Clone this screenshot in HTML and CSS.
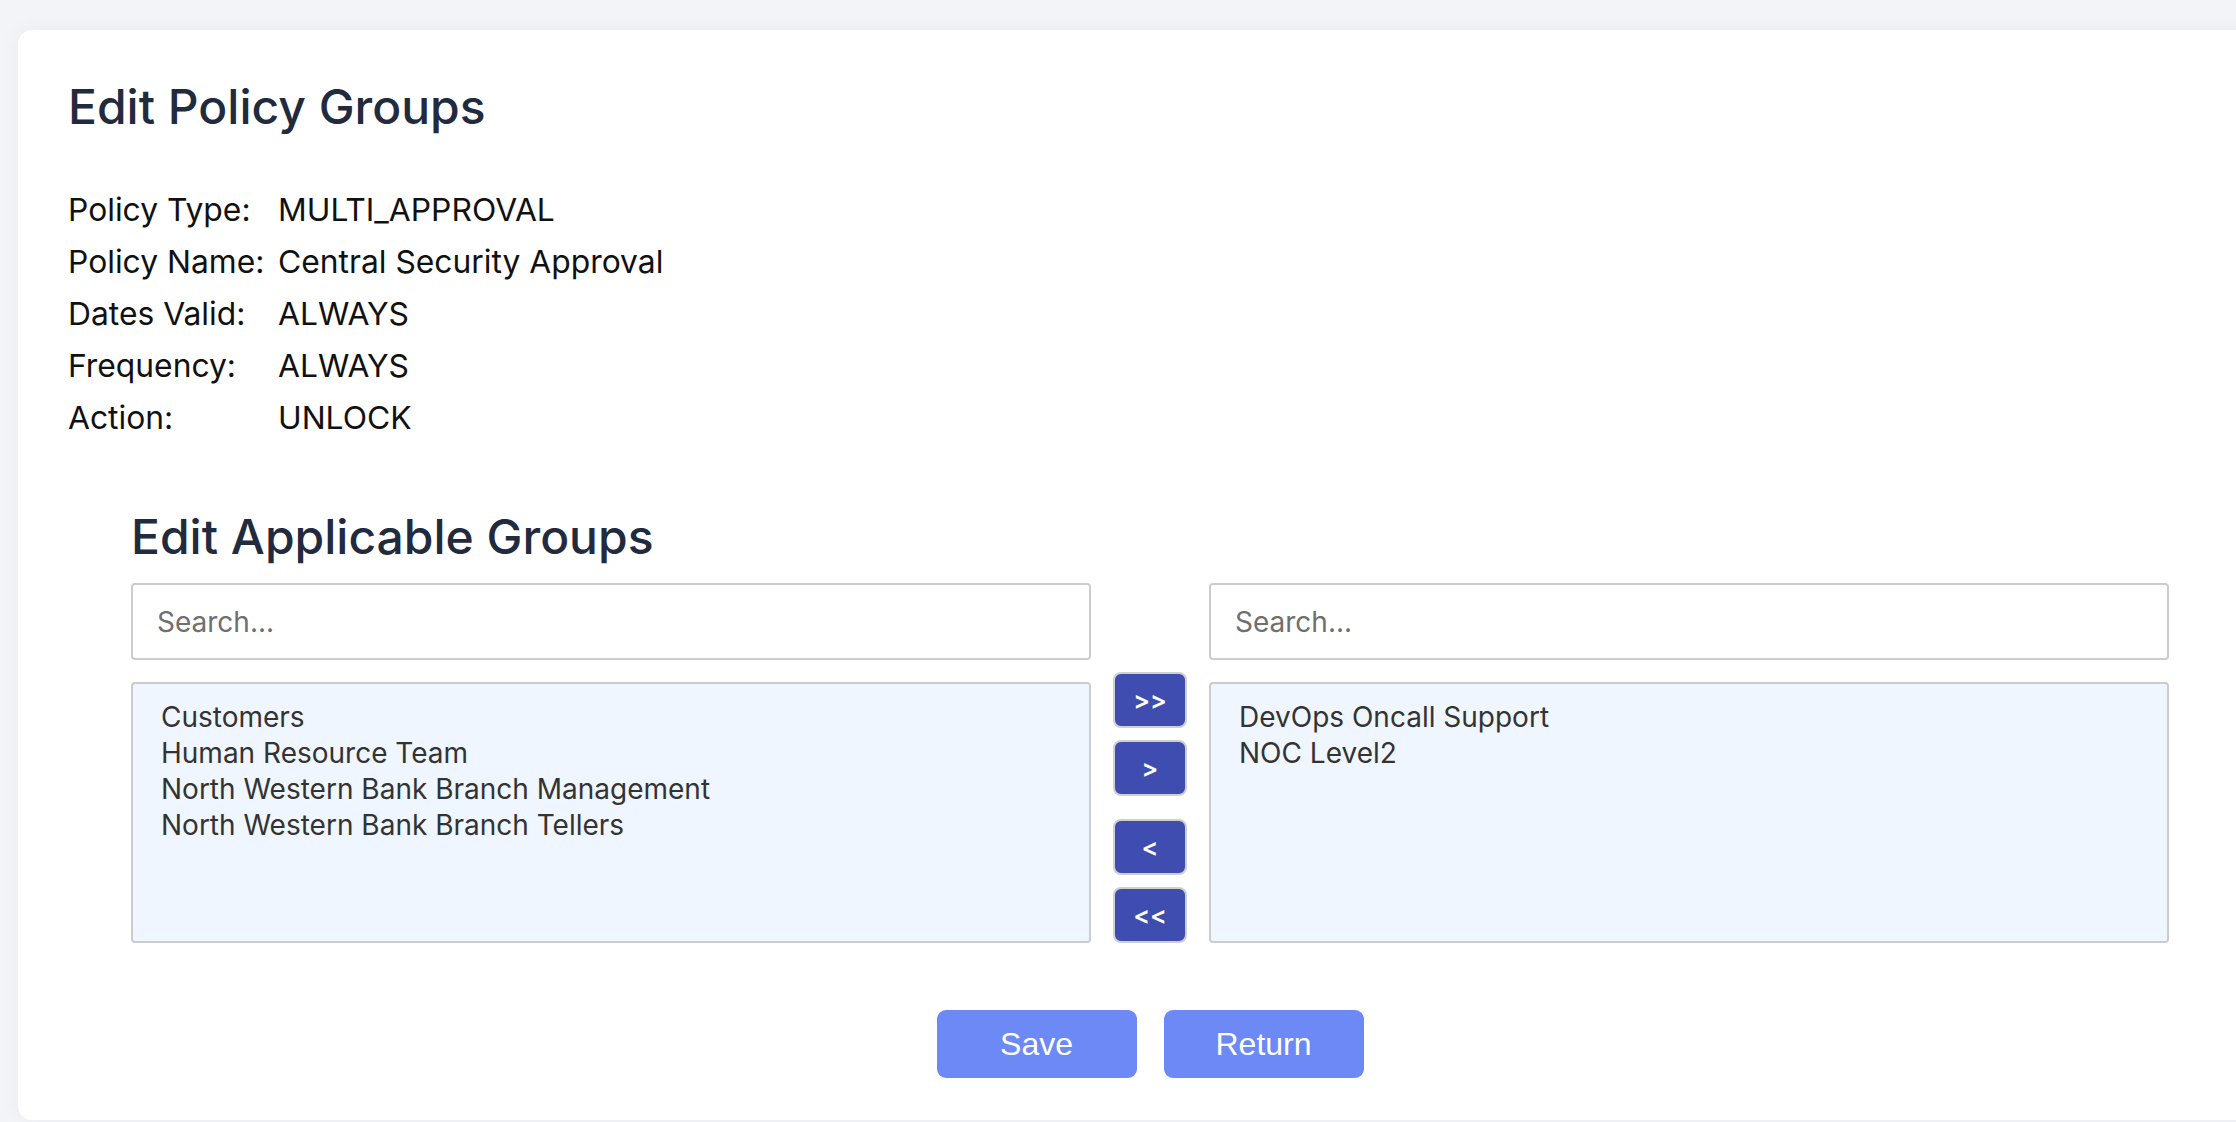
FILE: index.html
```html
<!DOCTYPE html>
<html lang="en">
<head>
<meta charset="utf-8">
<title>Edit Policy Groups</title>
<link rel="stylesheet" href="styles.css">
</head>
<body>
<main class="card">
  <h1 class="title">Edit Policy Groups</h1>
  <dl class="info">
    <dt>Policy Type:</dt><dd>MULTI_APPROVAL</dd>
    <dt>Policy Name:</dt><dd>Central Security Approval</dd>
    <dt>Dates Valid:</dt><dd>ALWAYS</dd>
    <dt>Frequency:</dt><dd>ALWAYS</dd>
    <dt>Action:</dt><dd>UNLOCK</dd>
  </dl>
  <section class="groups">
    <h2 class="subtitle">Edit Applicable Groups</h2>
    <div class="dual">
      <input class="search" type="text" placeholder="Search...">
      <div class="spacer"></div>
      <input class="search" type="text" placeholder="Search...">
      <ul class="list">
        <li>Customers</li>
        <li>Human Resource Team</li>
        <li>North Western Bank Branch Management</li>
        <li>North Western Bank Branch Tellers</li>
      </ul>
      <div class="moves">
        <button class="move">&gt;&gt;</button>
        <button class="move">&gt;</button>
        <button class="move move-gap">&lt;</button>
        <button class="move">&lt;&lt;</button>
      </div>
      <ul class="list">
        <li>DevOps Oncall Support</li>
        <li>NOC Level2</li>
      </ul>
    </div>
    <div class="actions">
      <button class="action">Save</button>
      <button class="action">Return</button>
    </div>
  </section>
</main>
</body>
</html>
```

FILE: styles.css
```css
html, body {
  margin: 0;
  padding: 0;
  overflow: hidden;
}
body {
  background: #f3f4f8;
  font-family: "Inter", "Liberation Sans", sans-serif;
  padding: 30px 0 0 18px;
  height: 1122px;
  box-sizing: border-box;
}
.card {
  background: #ffffff;
  border-radius: 14px;
  width: 2290px;
  height: 1090px;
  box-sizing: border-box;
  padding: 48px 0 0 50px;
  box-shadow: 0 0 24px rgba(30, 40, 80, 0.04);
}
.title {
  margin: 0;
  font-size: 48px;
  line-height: 58px;
  font-weight: 500;
  color: #222a3d;
}
.info {
  margin: 48px 0 0 0;
  display: grid;
  grid-template-columns: 210px auto;
  justify-content: start;
  font-size: 31.8px;
  line-height: 52px;
  color: #111111;
}
.info dt, .info dd {
  margin: 0;
}
.groups {
  margin: 64px 0 0 63px;
  width: 2038px;
}
.subtitle {
  margin: 0;
  font-size: 48px;
  line-height: 58px;
  font-weight: 500;
  color: #222a3d;
}
.dual {
  margin-top: 17px;
  display: grid;
  grid-template-columns: 960px 74px 960px;
  grid-template-rows: 77px 261px;
  column-gap: 22px;
  row-gap: 22px;
}
.search {
  box-sizing: border-box;
  width: 100%;
  height: 77px;
  margin: 0;
  border: 2px solid #cccccc;
  border-radius: 4px;
  padding: 0 24px;
  font-family: "Inter", sans-serif;
  font-size: 28px;
  color: #333333;
  background: #ffffff;
  outline: none;
}
.search::placeholder {
  color: #6f6f6f;
}
.list {
  box-sizing: border-box;
  margin: 0;
  list-style: none;
  height: 261px;
  border: 2px solid #cccccc;
  border-radius: 4px;
  background: #eff6ff;
  padding: 15px 28px;
  font-size: 28px;
  line-height: 36px;
  color: #333333;
}
.moves {
  margin-top: -10px;
  display: flex;
  flex-direction: column;
  gap: 12px;
}
.move {
  box-sizing: border-box;
  width: 74px;
  height: 56px;
  margin: 0;
  border: 2px solid #cfcfcf;
  border-radius: 8px;
  background: #3f4db1;
  color: #ffffff;
  font-family: "Inter", sans-serif;
  font-size: 25px;
  font-weight: 600;
  letter-spacing: 0;
  padding: 0;
}
.move-gap {
  margin-top: 11px;
}
.actions {
  margin-top: 67px;
  display: flex;
  justify-content: center;
  gap: 27px;
}
.action {
  width: 200px;
  height: 68px;
  border: none;
  border-radius: 9px;
  background: #6c89f5;
  color: #ffffff;
  font-family: "Liberation Sans", Arial, sans-serif;
  font-size: 32px;
  padding: 0;
}
```
